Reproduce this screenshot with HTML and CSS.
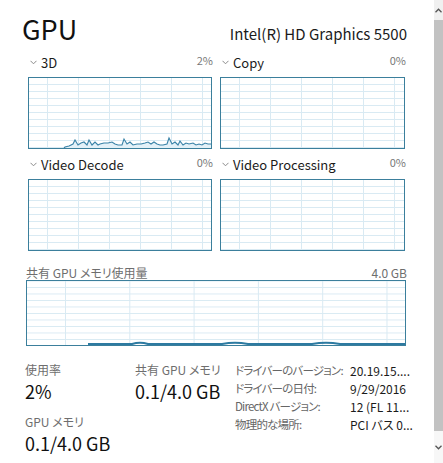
FILE: index.html
```html
<!DOCTYPE html>
<html lang="ja">
<head>
<meta charset="utf-8">
<title>GPU</title>
<link rel="stylesheet" href="styles.css">
</head>
<body>
<div class="window">
  <main class="content">
    <header class="head">
      <h1 class="title">GPU</h1>
      <div class="model">Intel(R) HD Graphics 5500</div>
    </header>

    <section class="engines">
      <div class="engine">
        <div class="label-row">
          <span class="name"><svg class="chev" width="7" height="5" viewBox="0 0 7 5"><polyline points="0.5,0.8 3.5,3.8 6.5,0.8" /></svg>3D</span>
          <span class="pct">2%</span>
        </div>
        <div class="chart chart-small">
          <svg class="plot" viewBox="0 0 182 70" preserveAspectRatio="none">
            <polygon class="fill" points="35,70 36,69 40,68 44,66 46,62 49,67 52,65 55,64 58,67 60,62 63,67 66,64 69,67 71,66 75,65 79,65 83,64 86,66 89,67 93,67 95,61 98,66 101,64 104,67 108,66 112,66 116,65 119,64 122,66 125,64 128,66 131,67 134,67 138,66 140,60 143,66 146,64 149,67 151,63 154,67 157,65 160,66 164,65 167,67 170,66 173,67 176,65 179,66 182,66 182,70" />
            <polyline class="line" points="35,70 36,69 40,68 44,66 46,62 49,67 52,65 55,64 58,67 60,62 63,67 66,64 69,67 71,66 75,65 79,65 83,64 86,66 89,67 93,67 95,61 98,66 101,64 104,67 108,66 112,66 116,65 119,64 122,66 125,64 128,66 131,67 134,67 138,66 140,60 143,66 146,64 149,67 151,63 154,67 157,65 160,66 164,65 167,67 170,66 173,67 176,65 179,66 182,66" />
          </svg>
        </div>
      </div>
      <div class="engine">
        <div class="label-row">
          <span class="name"><svg class="chev" width="7" height="5" viewBox="0 0 7 5"><polyline points="0.5,0.8 3.5,3.8 6.5,0.8" /></svg>Copy</span>
          <span class="pct">0%</span>
        </div>
        <div class="chart chart-small"></div>
      </div>
      <div class="engine">
        <div class="label-row">
          <span class="name"><svg class="chev" width="7" height="5" viewBox="0 0 7 5"><polyline points="0.5,0.8 3.5,3.8 6.5,0.8" /></svg>Video Decode</span>
          <span class="pct">0%</span>
        </div>
        <div class="chart chart-small"></div>
      </div>
      <div class="engine">
        <div class="label-row">
          <span class="name"><svg class="chev" width="7" height="5" viewBox="0 0 7 5"><polyline points="0.5,0.8 3.5,3.8 6.5,0.8" /></svg>Video Processing</span>
          <span class="pct">0%</span>
        </div>
        <div class="chart chart-small"></div>
      </div>
    </section>

    <section class="shared">
      <div class="shared-row">
        <span>共有 GPU メモリ使用量</span>
        <span>4.0 GB</span>
      </div>
      <div class="chart chart-wide">
        <svg class="plot" viewBox="0 0 378 64" preserveAspectRatio="none">
          <path class="memline" d="M61,63 L105,63 Q113,60.5 121,63 L195,63 Q208,60.5 221,63 L285,63 Q299,60.5 313,63 L378,63" />
        </svg>
      </div>
    </section>

    <section class="stats">
      <div class="stat">
        <div class="stat-label">使用率</div>
        <div class="stat-value">2%</div>
      </div>
      <div class="stat">
        <div class="stat-label">共有 GPU メモリ</div>
        <div class="stat-value">0.1/4.0 GB</div>
      </div>
      <dl class="info">
        <dt>ドライバーのバージョン:</dt><dd>20.19.15....</dd>
        <dt>ドライバーの日付:</dt><dd>9/29/2016</dd>
        <dt>DirectX バージョン:</dt><dd>12 (FL 11...</dd>
        <dt>物理的な場所:</dt><dd>PCI バス 0...</dd>
      </dl>
      <div class="stat stat-wide">
        <div class="stat-label">GPU メモリ</div>
        <div class="stat-value">0.1/4.0 GB</div>
      </div>
    </section>
  </main>

  <aside class="scrollbar">
    <div class="sb-btn sb-up"><svg width="7" height="5" viewBox="0 0 7 5"><polyline points="0.5,4.2 3.5,1.2 6.5,4.2" /></svg></div>
    <div class="sb-thumb"></div>
    <div class="sb-btn sb-down"><svg width="7" height="5" viewBox="0 0 7 5"><polyline points="0.5,0.8 3.5,3.8 6.5,0.8" /></svg></div>
  </aside>
</div>
</body>
</html>
```

FILE: styles.css
```css
* { box-sizing: border-box; }

html, body {
  margin: 0;
  padding: 0;
  background: #ffffff;
}

body {
  width: 443px;
  height: 463px;
  overflow: hidden;
  font-family: "Noto Sans CJK JP", "Noto Sans", sans-serif;
  font-feature-settings: "palt" 1;
  color: #1b1b1b;
}

.window {
  display: flex;
  width: 443px;
  height: 463px;
}

.content {
  width: 434px;
  padding: 14px 27px 0 22px;
  display: flex;
  flex-direction: column;
}

/* header */
.head {
  display: flex;
  justify-content: space-between;
  align-items: baseline;
}

.title {
  margin: 0;
  font-size: 27px;
  font-weight: 400;
  line-height: 30px;
  color: #111;
}

.model {
  font-size: 15px;
  line-height: 20px;
  color: #1b1b1b;
}

/* engines */
.engines {
  margin: 8px 0 0 6px;
  display: grid;
  grid-template-columns: 184px 185px;
  column-gap: 8px;
  row-gap: 5px;
}

.label-row {
  display: flex;
  justify-content: space-between;
  align-items: baseline;
  height: 16px;
  line-height: 16px;
  margin-bottom: 9px;
  padding-left: 2px;
}

.name {
  font-size: 13px;
  color: #1b1b1b;
  display: flex;
  align-items: center;
}

.chev {
  margin-right: 4px;
  fill: none;
  stroke: #8a8a8a;
  stroke-width: 1;
}

.pct {
  font-size: 11px;
  color: #777;
  margin-right: -1px;
}

.chart {
  border: 1px solid #3b7f9c;
  background-color: #ffffff;
  background-repeat: repeat;
}

.chart-small {
  height: 72px;
  background-image:
    linear-gradient(to right, #d9eaf3 1px, transparent 1px),
    linear-gradient(to bottom, #d9eaf3 1px, transparent 1px);
  background-size: 31px 100%, 100% 7px;
  background-position: 18px 0, 0 6px;
}

.plot {
  display: block;
  width: 100%;
  height: 100%;
}

.fill {
  fill: #e3f1f8;
  stroke: none;
}

.line {
  fill: none;
  stroke: #3a83a8;
  stroke-width: 1.1;
}

/* shared memory */
.shared {
  margin: 13px 0 0 4px;
}

.shared-row {
  display: flex;
  justify-content: space-between;
  align-items: center;
  height: 16px;
  font-size: 12px;
  color: #6e6e6e;
}

.chart-wide {
  width: 380px;
  height: 66px;
  background-image:
    linear-gradient(to right, #d9eaf3 1px, transparent 1px),
    linear-gradient(to bottom, #d9eaf3 1px, transparent 1px);
  background-size: 64.3px 100%, 100% 6.5px;
  background-position: 38px 0, 0 6px;
}

.memline {
  fill: none;
  stroke: #2d7aa1;
  stroke-width: 2;
}

/* stats */
.stats {
  margin: 16px 0 0 3px;
  display: grid;
  grid-template-columns: 110px 100px 1fr;
  align-items: start;
}

.stat-label {
  font-size: 12px;
  line-height: 16px;
  color: #6e6e6e;
}

.stat-value {
  font-size: 18px;
  line-height: 24px;
  color: #111;
  margin-top: 1px;
}

.stat-wide {
  grid-column: 1 / 3;
  margin-top: 11px;
}

.info {
  grid-row: 1 / 3;
  grid-column: 3;
  margin: -1px 0 0 0;
  display: grid;
  grid-template-columns: 115px 1fr;
  grid-auto-rows: 18px;
  align-items: center;
  font-size: 12px;
}

.info dt {
  color: #666;
  white-space: nowrap;
  font-size: 11.5px;
  letter-spacing: -0.8px;
}

.info dd {
  margin: 0;
  color: #1b1b1b;
  white-space: nowrap;
}

/* scrollbar */
.scrollbar {
  width: 9px;
  height: 463px;
  display: flex;
  flex-direction: column;
  background: #f0f0f0;
}

.sb-btn {
  display: flex;
  justify-content: center;
  align-items: center;
}

.sb-btn svg {
  fill: none;
  stroke: #555;
  stroke-width: 1.3;
}

.sb-up {
  height: 20px;
}

.sb-thumb {
  flex: 1;
  background: #c2c2c2;
}

.sb-down {
  height: 32px;
  background: #f7f7f7;
}
```
